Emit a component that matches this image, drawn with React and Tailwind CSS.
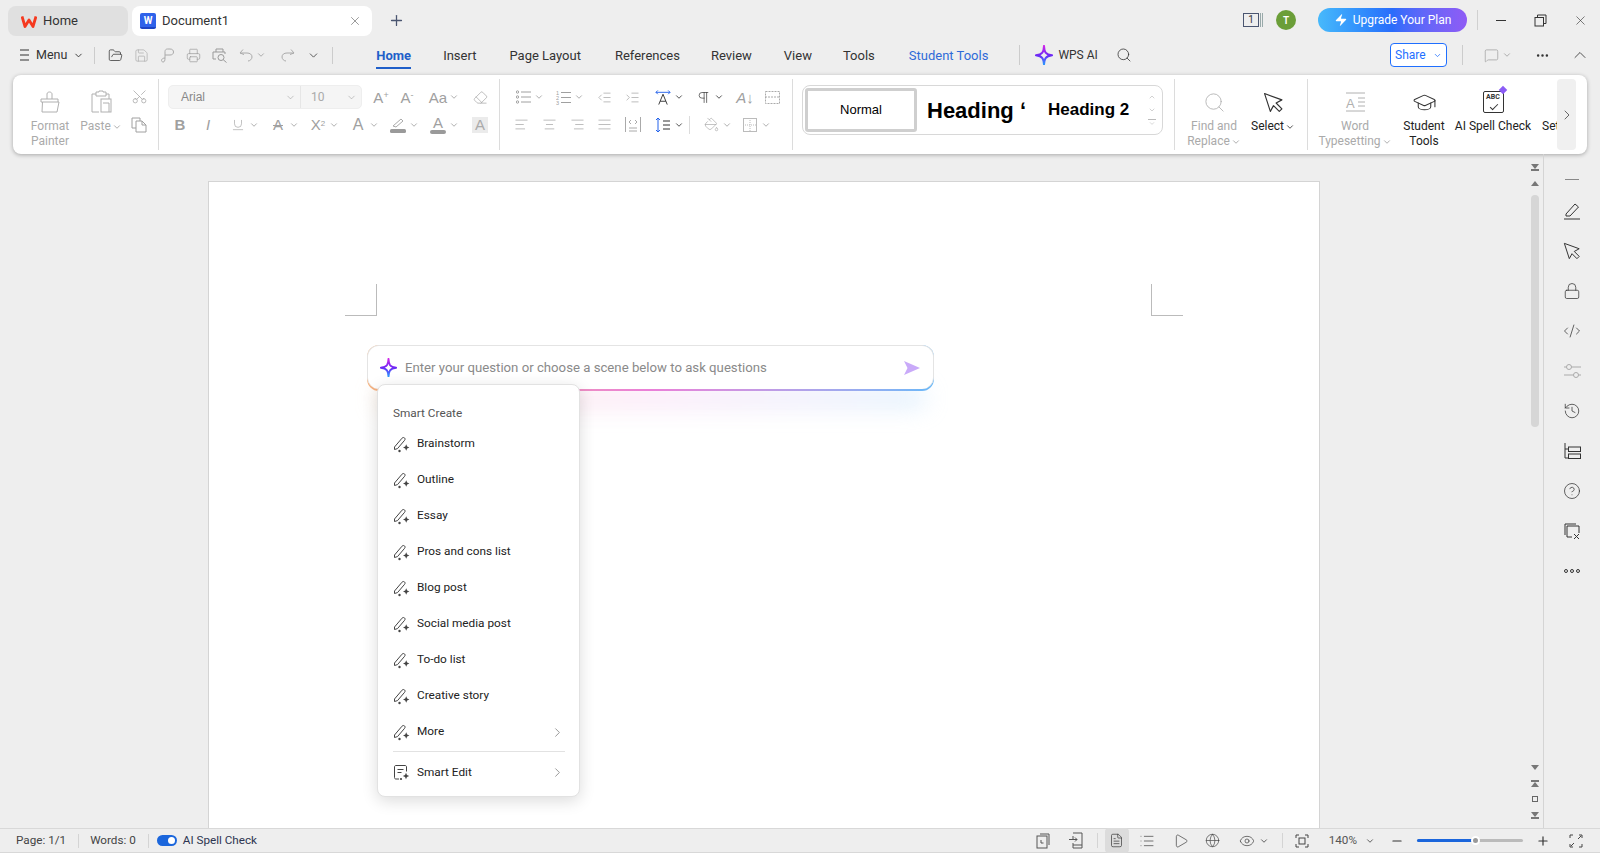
import React from 'react'
import {
  AlignCenter, AlignJustify, AlignLeft, AlignRight, ChevronDown, ChevronRight, ChevronUp, CodeXml, Ellipsis,
  Eraser, Eye, FileText, FolderOpen, Globe, GraduationCap, History, Indent, List, Lock, MessageSquare,
  Minus, Outdent, PaintBucket, Pilcrow, Play, Plus, Printer, Save, Scissors, Search, Underline, X, Zap, CircleHelp,
} from 'lucide-react'

const font = { fontFamily: 'Roboto, "Noto Sans", sans-serif' }

const Star = ({ size = 20 }) => (
  <svg width={size} height={size * 1.15} viewBox="0 0 20 23">
    <defs>
      <linearGradient id="starG" x1="0" y1="0" x2="0" y2="1">
        <stop offset="0" stopColor="#d026e8" />
        <stop offset="0.5" stopColor="#6d28f5" />
        <stop offset="1" stopColor="#2b9cff" />
      </linearGradient>
    </defs>
    <path d="M10 1 C10.4 8 11.5 10.5 19 11.5 C11.5 12.5 10.4 15 10 22 C9.6 15 8.5 12.5 1 11.5 C8.5 10.5 9.6 8 10 1 Z" fill="none" stroke="url(#starG)" strokeWidth="2.2" strokeLinejoin="round" />
  </svg>
)

const Cursor = ({ size = 20, color = '#333' }) => (
  <svg width={size} height={size} viewBox="0 0 20 20" fill="none" stroke={color} strokeWidth="1.1" strokeLinejoin="round">
    <path d="M1.5 1.5 L18 7.5 L12.5 10.5 L18 16 L15.5 18.5 L10 13 L7 18.5 Z" />
  </svg>
)

const Spark = ({ x, y, r = 3 }) => (
  <path d={`M${x} ${y - r} L${x + r * 0.3} ${y - r * 0.3} L${x + r} ${y} L${x + r * 0.3} ${y + r * 0.3} L${x} ${y + r} L${x - r * 0.3} ${y + r * 0.3} L${x - r} ${y} L${x - r * 0.3} ${y - r * 0.3} Z`} fill="#444" stroke="none" />
)

const PenSpark = () => (
  <svg width="17" height="17" viewBox="0 0 17 17" fill="none" stroke="#444" strokeWidth="1">
    <path d="M1.5 11 L9 2.2 C9.8 1.3 11 1.3 11.6 2 C12.2 2.7 12.2 3.5 11.6 4.3 L4.5 12.6 L1.5 13.5 Z" />
    <Spark x={13.2} y={11.5} r={3.2} />
    <circle cx="6.5" cy="15" r="1.2" fill="#444" stroke="none" />
  </svg>
)

const EditSpark = () => (
  <svg width="17" height="17" viewBox="0 0 17 17" fill="none" stroke="#444" strokeWidth="1">
    <path d="M6 15 H3 C2 15 1.5 14.5 1.5 13.5 V3 C1.5 2 2 1.5 3 1.5 H12 C13 1.5 13.5 2 13.5 3 V7.5" />
    <path d="M4.5 5.5 H10.5 M4.5 8.5 H8.5" />
    <Spark x={13} y={12} r={3.2} />
    <circle cx="8" cy="15" r="1.1" fill="#444" stroke="none" />
  </svg>
)

const Chev = ({ dark, className = '' }) => (
  <ChevronDown size={10} strokeWidth={2} className={`${dark ? 'text-[#333]' : 'text-[#a0a0a0]'} shrink-0 ${className}`} />
)

// one tool: the 16px icon box sits at the left of the cell, so the cell width is the distance to the next one
const Tool = ({ w, chev, dark, children }) => (
  <div className={`${w} flex items-center shrink-0`}>
    <div className={`w-4 h-4 flex items-center justify-center shrink-0 ${dark ? 'text-[#333]' : 'text-[#a0a0a0]'}`}>{children}</div>
    {chev && <Chev dark={dark} className="ml-[3px]" />}
  </div>
)

const Glyph = ({ children, className = '' }) => (
  <span className={`leading-none text-[15px] whitespace-nowrap ${className}`} style={{ fontFamily: '"Liberation Sans", sans-serif' }}>{children}</span>
)

const BigTool = ({ w, icon, lines, chev, dark, className = '' }) => (
  <div className={`${w} flex flex-col items-center pt-[10px] shrink-0 ${className}`}>
    <div className="h-[30px] flex items-center justify-center translate-y-[2px]">{icon}</div>
    <div className={`mt-1 text-[12px] leading-[15px] text-center whitespace-nowrap ${dark ? 'text-[#222]' : 'text-[#aaa]'}`}>
      {lines.map((l, i) => (
        <div key={l} className="flex items-center justify-center">
          {l}
          {chev && i === lines.length - 1 && <Chev dark={dark} className="ml-[1px]" />}
        </div>
      ))}
    </div>
  </div>
)

const TitleBar = () => (
  <div className="h-[42px] flex items-start pt-[6px] pl-2 shrink-0">
    <div className="w-[120px] h-[30px] bg-[#e0e0e0] rounded-lg flex items-center pl-[13px] gap-[6px] text-[13px] text-[#333]">
      <svg width="16" height="13" viewBox="0 0 16 13">
        <path d="M1 1.5 L4 11.5 L8 5 L12 11.5 L15 1.5" fill="none" stroke="#f5391f" strokeWidth="2.8" strokeLinejoin="round" />
      </svg>
      Home
    </div>
    <div className="ml-1 w-[240px] h-[30px] bg-white rounded-lg flex items-center pl-2 text-[13px] text-[#333]">
      <div className="w-4 h-4 rounded-[2px] bg-[#2f62ea] text-white text-[10px] font-bold flex items-center justify-center border-b-2 border-[#1d44c4]">W</div>
      <span className="ml-[6px] flex-1">Document1</span>
      <X size={14} strokeWidth={1} className="mr-[10px] text-[#555]" />
    </div>
    <Plus size={17} strokeWidth={1.8} className="ml-4 mt-[6px] text-[#4a5570]" />
    <div className="flex-1" />
    <div className="flex items-center h-6 mt-[2px]">
      <div className="w-[16px] h-[14px] border border-[#4a5570] text-[10px] leading-[12px] text-center text-[#333]">1</div>
      <div className="ml-[1px] w-[3px] h-[14px] border-x border-[#9aa]" />
      <div className="ml-[13px] w-5 h-5 rounded-full bg-[#6b9e38] text-white text-[10px] font-semibold flex items-center justify-center">T</div>
      <div className="ml-[22px] w-[149px] h-6 rounded-full bg-gradient-to-r from-[#48b9fb] via-[#2a6cfb] to-[#8f5bf5] flex items-center justify-center gap-[5px] text-white text-[12px]">
        <Zap size={14} fill="#fff" strokeWidth={0} />
        Upgrade Your Plan
      </div>
      <div className="ml-[10px] w-px h-5 bg-[#d0d0d0]" />
      <div className="ml-[18px] w-[10px] h-px bg-[#333]" />
      <svg className="ml-[28px]" width="13" height="13" viewBox="0 0 13 13" fill="none" stroke="#333">
        <path d="M3.5 3.5 V1 H12 V9.5 H9.5" />
        <rect x="1" y="3.5" width="8.5" height="8.5" />
      </svg>
      <X size={15} strokeWidth={1} className="ml-[26px] mr-[12px] text-[#333]" />
    </div>
  </div>
)

const tabs = [
  ['Insert', 'ml-[32px]'],
  ['Page Layout', 'ml-[33px]'],
  ['References', 'ml-[34px]'],
  ['Review', 'ml-[31px]'],
  ['View', 'ml-[32px]'],
  ['Tools', 'ml-[31px]'],
]

const MenuBar = () => (
  <div className="h-[33px] flex items-center shrink-0 text-[#333] pb-[7px] whitespace-nowrap">
    <svg className="ml-5 shrink-0" width="9" height="12" viewBox="0 0 9 12" stroke="#333"><path d="M0 1 H9 M0 6 H9 M0 11 H9" /></svg>
    <span className="ml-[7px] text-[12.5px]">Menu</span>
    <ChevronDown size={11} className="ml-[6px]" />
    <div className="ml-[10px] w-px h-[17px] bg-[#ccc]" />
    <FolderOpen size={15} strokeWidth={1.2} className="ml-[13px]" />
    <Save size={15} strokeWidth={1.1} className="ml-[11px] text-[#aaa]" />
    <svg className="ml-[11px]" width="15" height="15" viewBox="0 0 15 15" fill="none" stroke="#aaa"><path d="M5 10 V3.5 C5 2 6 1 7.5 1 H10 C12.5 1 13.5 2.5 13.5 4 C13.5 6 12 7 10 7 H5 M5 10 C3 10 1.5 11 1.5 12.5 C1.5 13.5 2.5 14 3.2 14 C4.5 14 5 12.5 5 10 Z" /></svg>
    <Printer size={15} strokeWidth={1.1} className="ml-[11px] text-[#999]" />
    <svg className="ml-[11px]" width="16" height="15" viewBox="0 0 16 15" fill="none" stroke="#999"><path d="M4 4 V1 H11 V4 M1 11 V4 H13 V6 M1 11 H4" /><circle cx="9" cy="9.5" r="3" /><path d="M11.2 11.7 L14.5 14.5" /></svg>
    <svg className="ml-[11px]" width="14" height="14" viewBox="0 0 14 14" fill="none" stroke="#aaa"><path d="M1 5 L4 1.5 M1 5 L5 6.5 M1 5 H8 C11 5 13 6.5 13 9 C13 11 11 13 9 13" /></svg>
    <Chev className="ml-[3px]" />
    <svg className="ml-[15px]" width="14" height="14" viewBox="0 0 14 14" fill="none" stroke="#aaa"><path d="M13 5 L10 1.5 M13 5 L9 6.5 M13 5 H6 C3 5 1 6.5 1 9 C1 11 3 13 5 13" /></svg>
    <ChevronDown size={13} strokeWidth={1.6} className="ml-[12px] text-[#444]" />
    <div className="ml-[12px] w-px h-[17px] bg-[#ccc]" />
    <div className="ml-[43px] relative text-[13px] font-bold text-[#1f5fc9] h-[33px] flex items-center pt-[2px]">
      Home
      <div className="absolute left-0 right-0 bottom-[3px] h-[2px] bg-[#1f5fc9]" />
    </div>
    {tabs.map(([t, m]) => (
      <span key={t} className={`${m} text-[13px] text-[#333] pt-[2px]`}>{t}</span>
    ))}
    <span className="ml-[34px] text-[13px] text-[#2f6bd8] pt-[2px]">Student Tools</span>
    <div className="ml-[31px] w-px h-[20px] bg-[#ccc]" />
    <div className="ml-[15px] flex"><Star size={18} /></div>
    <span className="ml-[5px] text-[12px]">WPS AI</span>
    <Search size={16} strokeWidth={1.2} className="ml-[18px]" />
    <div className="ml-[258px] w-[57px] h-6 border border-[#1f6fff] rounded-[4px] flex items-center justify-center gap-[7px] text-[12px] text-[#1f6fff] bg-white">
      Share
      <ChevronDown size={9} strokeWidth={2} />
    </div>
    <div className="ml-[15px] w-px h-5 bg-[#ccc]" />
    <MessageSquare size={15} strokeWidth={1.1} className="ml-[21px] text-[#999]" />
    <Chev className="ml-[3px]" />
    <Ellipsis size={15} className="ml-[23px]" />
    <ChevronUp size={20} strokeWidth={1} className="ml-[20px]" />
  </div>
)

const Ribbon = () => (
  <div className="mx-[13px] w-[1574px] h-[79px] bg-white rounded-lg shadow-[0_1px_4px_rgba(0,0,0,0.3)] flex shrink-0 text-[#a0a0a0]">
    {/* clipboard */}
    <div className="w-[146px] my-1 border-r border-[#dcdcdc] flex shrink-0">
      <BigTool w="w-[74px]" className="-mt-1" lines={['Format', 'Painter']} icon={
        <svg width="20" height="23" viewBox="0 0 20 23" fill="none" stroke="#b0b0b0"><path d="M7 8 V3 C7 1.5 8.5 1 9.5 1 C11 1 12 2 12 3 V8 M1 8 H18 V11 L19 11 L17 21 H2 L2.5 11 H1 Z M2.5 11 H18" /></svg>
      } />
      <BigTool w="w-[42px]" className="-ml-[7px] -mt-1" lines={['Paste']} chev icon={
        <svg width="21" height="24" viewBox="0 0 21 24" fill="none" stroke="#b0b0b0"><path d="M5 4 H1 V22 H8 M15 4 H18 V9 M5 6 V2 H8 V1 H12 V2 H15 V6 Z" /><rect x="10" y="9" width="10" height="13" /><path d="M12 13 H18 V22" /></svg>
      } />
      <div className="w-[34px] flex flex-col items-center">
        <div className="h-[26px] flex items-end"><Scissors size={17} strokeWidth={1} className="-rotate-90" /></div>
        <div className="h-[40px] flex items-center">
          <svg width="16" height="16" viewBox="0 0 16 16" fill="none" stroke="#a0a0a0"><path d="M5 11 H1 V1 H9 V4" /><path d="M5 4 H11 L15 8 V15 H5 Z M11 4 V8 H15" /></svg>
        </div>
      </div>
    </div>

    {/* font */}
    <div className="w-[341px] my-1 border-r border-[#dcdcdc] shrink-0">
      <div className="h-[28px] flex items-center pl-[9px] mt-1">
        <div className="w-[194px] h-6 rounded-[5px] bg-[#f5f5f5] border border-[#eee] flex items-center text-[12px] text-[#888] shrink-0">
          <span className="ml-3 flex-1" style={{ fontFamily: '"Liberation Sans", sans-serif' }}>Arial</span>
          <ChevronDown size={11} strokeWidth={1} className="mr-[4px]" />
          <div className="w-px h-full bg-[#e6e6e6]" />
          <span className="ml-[10px] w-[35px] text-[#aaa]">10</span>
          <ChevronDown size={11} strokeWidth={1} className="mr-[4px]" />
        </div>
        <div className="ml-[11px] flex items-center">
          <Tool w="w-[26px]"><Glyph>A<sup className="text-[9px]">+</sup></Glyph></Tool>
          <Tool w="w-[31px]"><Glyph>A<sup className="text-[9px]">-</sup></Glyph></Tool>
          <Tool w="w-[42px]" chev><Glyph>Aa</Glyph></Tool>
          <Tool w="w-4"><Eraser size={15} strokeWidth={1.1} /></Tool>
        </div>
      </div>
      <div className="h-[27px] flex items-center pl-[13px]">
        <Tool w="w-[28px]"><Glyph className="font-bold">B</Glyph></Tool>
        <Tool w="w-[30px]"><Glyph className="italic">I</Glyph></Tool>
        <Tool w="w-[40px]" chev><Underline size={14} strokeWidth={1.1} /></Tool>
        <Tool w="w-[40px]" chev><Glyph className="line-through">A</Glyph></Tool>
        <Tool w="w-[40px]" chev><Glyph>X<sup className="text-[8px]">2</sup></Glyph></Tool>
        <Tool w="w-[40px]" chev><Glyph className="text-[16px]">A</Glyph></Tool>
        <Tool w="w-[40px]" chev>
          <svg width="16" height="16" viewBox="0 0 16 16" fill="none" stroke="#aaa"><path d="M3 9 L11 2 L13 4 L6 10 Z" /><rect x="0" y="12" width="16" height="4" rx="1.5" fill="#9a9a9a" stroke="none" /></svg>
        </Tool>
        <Tool w="w-[42px]" chev>
          <div className="flex flex-col items-center"><Glyph className="text-[12px]">A</Glyph><div className="w-4 h-1 rounded-sm bg-[#9a9a9a]" /></div>
        </Tool>
        <div className="w-4 h-4 bg-[#ebebeb] flex items-center justify-center text-[#aaa]"><Glyph className="text-[12px]">A</Glyph></div>
      </div>
    </div>

    {/* paragraph */}
    <div className="w-[293px] my-1 border-r border-[#dcdcdc] shrink-0">
      <div className="h-[28px] flex items-center pl-[15px] mt-1">
        <Tool w="w-[40px]" chev>
          <svg width="15" height="14" viewBox="0 0 15 14" fill="none" stroke="#a0a0a0"><circle cx="1.5" cy="2" r="1.2" /><circle cx="1.5" cy="7" r="1.2" /><circle cx="1.5" cy="12" r="1.2" /><path d="M5 2 H15 M5 7 H15 M5 12 H15" /></svg>
        </Tool>
        <Tool w="w-[41px]" chev>
          <svg width="15" height="15" viewBox="0 0 15 15" fill="none" stroke="#a0a0a0"><path d="M5 2.5 H15 M5 7.5 H15 M5 12.5 H15" /><text x="0" y="5" fontSize="5.5" fill="#a0a0a0" stroke="none" fontFamily="Liberation Sans">1</text><text x="0" y="10" fontSize="5.5" fill="#a0a0a0" stroke="none" fontFamily="Liberation Sans">2</text><text x="0" y="15" fontSize="5.5" fill="#a0a0a0" stroke="none" fontFamily="Liberation Sans">3</text></svg>
        </Tool>
        <Tool w="w-[28px]"><Outdent size={15} strokeWidth={1.1} /></Tool>
        <Tool w="w-[31px]"><Indent size={15} strokeWidth={1.1} /></Tool>
        <Tool w="w-[40px]" chev dark>
          <svg width="17" height="17" viewBox="0 0 17 17" fill="none">
            <path d="M1 3 H16 M3 1 L1 3 L3 5 M14 1 L16 3 L14 5" stroke="#2563eb" />
            <path d="M4 16 L8.5 5 L13 16 M5.5 12.5 H11.5" stroke="#333" />
          </svg>
        </Tool>
        <Tool w="w-[42px]" chev dark><Pilcrow size={15} strokeWidth={1.1} /></Tool>
        <Tool w="w-[27px]"><Glyph className="italic text-[14px]">A↓</Glyph></Tool>
        <Tool w="w-4">
          <svg width="15" height="13" viewBox="0 0 15 13" fill="none" stroke="#aaa" strokeDasharray="2 1"><rect x="0.5" y="0.5" width="14" height="12" /><path d="M0 6 H15" /></svg>
        </Tool>
      </div>
      <div className="h-[27px] flex items-center pl-[13px]">
        <Tool w="w-[28px]"><AlignLeft size={15} strokeWidth={1.1} /></Tool>
        <Tool w="w-[28px]"><AlignCenter size={15} strokeWidth={1.1} /></Tool>
        <Tool w="w-[27px]"><AlignRight size={15} strokeWidth={1.1} /></Tool>
        <Tool w="w-[29px]"><AlignJustify size={15} strokeWidth={1.1} /></Tool>
        <Tool w="w-[30px]">
          <svg width="16" height="15" viewBox="0 0 16 15" fill="none" stroke="#aaa"><path d="M0.5 0 V15 M15.5 0 V15 M4 11 H12 M4 14 H12 M6 3 L4 5 L6 7 M10 3 L12 5 L10 7" /></svg>
        </Tool>
        <Tool w="w-[34px]" chev dark>
          <svg width="16" height="16" viewBox="0 0 16 16" fill="none" stroke="#333"><path d="M8 4 H15 M8 8 H15 M8 12 H15" /><path d="M3 1 V15 M1 3 L3 1 L5 3 M1 13 L3 15 L5 13" stroke="#2563eb" /></svg>
        </Tool>
        <div className="w-px h-[18px] bg-[#dcdcdc] shrink-0" />
        <div className="ml-[13px] flex items-center">
          <Tool w="w-[39px]" chev><PaintBucket size={15} strokeWidth={1} /></Tool>
          <Tool w="w-4" chev>
            <svg width="14" height="14" viewBox="0 0 14 14" fill="none" stroke="#bbb"><rect x="0.5" y="0.5" width="13" height="13" /><path d="M7 0 V14 M0 7 H14" strokeDasharray="1 1" /></svg>
          </Tool>
        </div>
      </div>
    </div>

    {/* styles */}
    <div className="w-[382px] my-1 border-r border-[#dcdcdc] shrink-0 pl-[9px] pt-[6px]">
      <div className="w-[361px] h-[50px] rounded-lg border border-[#d8d8d8] flex items-center text-black" style={{ fontFamily: '"Liberation Sans", sans-serif' }}>
        <div className="ml-[2px] w-[112px] h-[44px] rounded-[3px] border-[3px] border-[#cfcfcf] bg-white flex items-center justify-center text-[13px]">Normal</div>
        <div className="ml-[10px] w-[100px] whitespace-nowrap text-[22px] font-bold">Heading ʻ</div>
        <div className="ml-[21px] w-[95px] whitespace-nowrap text-[17px] font-bold">Heading 2</div>
        <div className="ml-[5px] flex flex-col items-center gap-[5px] text-[#bbb]">
          <ChevronUp size={8} strokeWidth={2} />
          <ChevronDown size={8} strokeWidth={2} />
          <ChevronDown size={8} strokeWidth={2} className="border-t border-[#bbb]" />
        </div>
      </div>
    </div>

    {/* find */}
    <div className="w-[133px] my-1 border-r border-[#dcdcdc] flex shrink-0">
      <BigTool w="w-[78px]" className="-mt-1" lines={['Find and', 'Replace']} chev icon={<Search size={23} strokeWidth={0.9} className="text-[#b0b0b0]" />} />
      <BigTool w="w-[40px]" className="-mt-1" dark lines={['Select']} chev icon={<Cursor size={21} />} />
    </div>

    {/* tools, cut off by the scroll button */}
    <div className="flex shrink-0">
      <BigTool w="w-[94px]" lines={['Word', 'Typesetting']} chev icon={
        <svg width="21" height="20" viewBox="0 0 21 20" fill="none" stroke="#b0b0b0"><path d="M1 1 H20 M1 19 H20 M13 6 H20 M13 10 H20 M13 14 H20" /><text x="1" y="16" fontSize="13" fill="#b0b0b0" stroke="none" fontFamily="Liberation Sans">A</text></svg>
      } />
      <BigTool w="w-[44px]" dark lines={['Student', 'Tools']} icon={<GraduationCap size={25} strokeWidth={1} className="text-[#333]" />} />
      <BigTool w="w-[94px]" dark lines={['AI Spell Check']} icon={
        <div className="relative w-[21px] h-[22px] border border-[#333] rounded-[2px] text-[7px] font-bold text-[#333] text-center leading-[11px]">
          ABC
          <div className="absolute -top-[5px] -right-[3px] w-[6px] h-[6px] bg-[#8b5cf6] rotate-45" />
          <div className="absolute left-[6px] bottom-[4px] w-[8px] h-[4px] border-l border-b border-[#333] -rotate-45" />
        </div>
      } />
      <div className="w-[17px] overflow-hidden pl-[2px] pt-[44px] text-[12px] leading-[15px] text-[#222] whitespace-nowrap">Set</div>
      <div className="w-[19px] h-[71px] mt-1 rounded bg-[#f0f0f0] flex items-center justify-center text-[#444]">
        <ChevronRight size={16} strokeWidth={1.2} />
      </div>
    </div>
  </div>
)

const items = ['Brainstorm', 'Outline', 'Essay', 'Pros and cons list', 'Blog post', 'Social media post', 'To-do list', 'Creative story', 'More']

const AskBox = () => (
  <>
    <div className="absolute left-[170px] top-[208px] w-[545px] h-[16px] bg-gradient-to-r from-[#fbd0a8] via-[#f4c4ee] to-[#b5dcfb] blur-md opacity-50" />
    <div className="absolute left-[158px] top-[163px] w-[567px] h-[46px] rounded-xl bg-gradient-to-r from-[#f8b27c] via-[#ea7fd8] to-[#68b8f8] pb-[2px]">
      <div className="h-full rounded-xl bg-white border-x border-t border-[#e4e4e4] flex items-center pl-[12px]">
        <Star size={17} />
        <span className="ml-2 flex-1 text-[13.2px] pt-[1px] text-[#8a8a8a]">Enter your question or choose a scene below to ask questions</span>
        <svg className="mr-[13px]" width="16" height="14" viewBox="0 0 16 14"><path d="M0 0 L16 7 L0 14 L3.5 7 Z" fill="#c9aaf9" /></svg>
      </div>
    </div>
    <div className="absolute left-[168px] top-[202px] w-[203px] h-[413px] bg-white rounded-lg border border-[#e2e2e2] shadow-[0_4px_16px_rgba(0,0,0,0.14)] pl-[15px] pr-[14px] text-[11.8px] text-[#222]">
      <div className="mt-[20px] text-[#555] leading-4">Smart Create</div>
      <div className="mt-[5px]">
        {items.map((t) => (
          <div key={t} className="h-[36px] flex items-center">
            <PenSpark />
            <span className="ml-[7px] flex-1">{t}</span>
            {t === 'More' && <ChevronRight size={15} strokeWidth={1.2} className="text-[#777]" />}
          </div>
        ))}
      </div>
      <div className="mt-px h-px bg-[#e2e2e2]" />
      <div className="h-[41px] flex items-center">
        <EditSpark />
        <span className="ml-[7px] flex-1">Smart Edit</span>
        <ChevronRight size={15} strokeWidth={1.2} className="text-[#777]" />
      </div>
    </div>
  </>
)

const sideIcons = [
  <svg key="pen" width="18" height="18" viewBox="0 0 18 18" fill="none" stroke="#333"><path d="M3 12 L12 2 L15.5 5 L7 14 H3 Z M1 17 H17" /></svg>,
  <Cursor key="cur" size={18} />,
  <Lock key="lock" size={18} strokeWidth={1} className="text-[#333]" />,
  <CodeXml key="code" size={18} strokeWidth={1} className="text-[#333]" />,
  <svg key="sl" width="17" height="16" viewBox="0 0 17 16" fill="none" stroke="#aaa"><circle cx="5" cy="4" r="2.5" /><path d="M0 4 H2.5 M7.5 4 H17" /><circle cx="12" cy="12" r="2.5" /><path d="M0 12 H9.5 M14.5 12 H17" /></svg>,
  <History key="hist" size={18} strokeWidth={1} className="text-[#333]" />,
  <svg key="tree" width="17" height="17" viewBox="0 0 17 17" fill="none" stroke="#333"><path d="M1 0 V15 H4 M1 6 H4" /><rect x="4.5" y="4" width="12" height="4.5" /><rect x="4.5" y="11" width="12" height="4.5" /></svg>,
  <CircleHelp key="help" size={18} strokeWidth={1} className="text-[#333]" />,
  <svg key="x" width="16" height="16" viewBox="0 0 16 16" fill="none" stroke="#333"><path d="M1 12 V1 H12 M3 14 V3 H15 V10 M3 14 H8 M10 11 L15 16 M15 11 L10 16" /></svg>,
  <svg key="dots" width="16" height="4" viewBox="0 0 16 4" fill="none" stroke="#333"><circle cx="2" cy="2" r="1.5" /><circle cx="8" cy="2" r="1.5" /><circle cx="14" cy="2" r="1.5" /></svg>,
]

const Arrow = ({ up, bar }) => (
  <div className="h-4 flex flex-col items-center justify-center">
    {bar && up && <div className="w-[8px] h-[2px] bg-[#777]" />}
    <div className={`w-0 h-0 border-x-[4px] border-x-transparent ${up ? 'border-b-[5px] border-b-[#777]' : 'border-t-[5px] border-t-[#777]'}`} />
    {bar && !up && <div className="w-[8px] h-[2px] bg-[#777]" />}
  </div>
)

const Main = () => (
  <div className="flex-1 flex min-h-0">
    <div className="flex-1 pl-[208px] pt-[27px] min-w-0">
      <div className="relative w-[1112px] h-full bg-white border-x border-t border-[#d4d4d4]">
        <div className="absolute left-[136px] top-[102px] w-8 h-8 border-r border-b border-[#bbb]" />
        <div className="absolute left-[942px] top-[102px] w-8 h-8 border-l border-b border-[#bbb]" />
        <AskBox />
      </div>
    </div>
    <div className="w-4 flex flex-col items-center shrink-0 pr-[1px]">
      <div className="mt-[5px]"><Arrow bar /></div>
      <Arrow up />
      <div className="mt-1 w-2 h-[232px] rounded bg-[#d6d6d6]" />
      <div className="flex-1" />
      <Arrow />
      <Arrow up bar />
      <div className="h-4 flex items-center"><div className="w-[6px] h-[6px] border border-[#666]" /></div>
      <Arrow bar />
      <div className="h-[5px]" />
    </div>
    <div className="w-[57px] border-l border-[#d4d4d4] flex flex-col items-center pt-2 shrink-0">
      <div className="h-[34px] flex items-center"><div className="w-[14px] h-px bg-[#888]" /></div>
      {sideIcons.map((ic, i) => (
        <div key={ic.key} className={`w-full flex items-center justify-center ${i === 0 ? 'h-[30px] mb-[5px]' : 'h-[40px]'}`}>{ic}</div>
      ))}
    </div>
  </div>
)

const StatusBar = () => (
  <div className="h-[25px] border-y border-[#d8d8d8] flex items-center text-[11.7px] text-[#444] shrink-0">
    <span className="ml-4">Page: 1/1</span>
    <div className="ml-[12px] w-px h-[14px] bg-[#d4d4d4]" />
    <span className="ml-[11px]">Words: 0</span>
    <div className="ml-3 w-px h-[14px] bg-[#d4d4d4]" />
    <div className="ml-2 w-5 h-[11px] rounded-full bg-[#1b66dc] flex items-center justify-end pr-[2px]">
      <div className="w-[7px] h-[7px] rounded-full bg-white" />
    </div>
    <span className="ml-[6px] text-[#2d3550]">AI Spell Check</span>
    <div className="flex-1" />
    <svg width="14" height="16" viewBox="0 0 14 16" fill="none" stroke="#555"><rect x="1" y="3" width="10" height="12" /><path d="M4 1 H13 V12 M5 7 V10 H7.5" /></svg>
    <svg className="ml-[18px]" width="16" height="17" viewBox="0 0 16 17" fill="none" stroke="#555"><path d="M5 1 H14 V16 H5 V11 M5 7 V4 M1 7.5 H9 M7 5.5 L9 7.5 L7 9.5 M5 13 H14" /></svg>
    <div className="ml-[13px] w-px h-[15px] bg-[#d4d4d4]" />
    <div className="ml-[7px] w-6 h-[25px] bg-[#dcdcdc] flex items-center justify-center rounded-sm">
      <FileText size={15} strokeWidth={1.1} className="text-[#333]" />
    </div>
    <List size={16} strokeWidth={1.1} className="ml-[10px] text-[#444]" />
    <Play size={16} strokeWidth={1.1} className="ml-[18px] text-[#444]" />
    <Globe size={15} strokeWidth={1.1} className="ml-[16px] text-[#444]" />
    <Eye size={16} strokeWidth={1.1} className="ml-[19px] text-[#444]" />
    <ChevronDown size={10} strokeWidth={2} className="ml-[4px] text-[#444]" />
    <div className="ml-[13px] w-px h-[15px] bg-[#d4d4d4]" />
    <svg className="ml-[12px]" width="14" height="14" viewBox="0 0 14 14" fill="none" stroke="#444"><path d="M1 4 V1 H4 M10 1 H13 V4 M13 10 V13 H10 M4 13 H1 V10" /><rect x="4" y="4" width="6" height="6" /></svg>
    <span className="ml-[20px] text-[#555]">140%</span>
    <ChevronDown size={10} strokeWidth={2} className="ml-[8px] text-[#444]" />
    <Minus size={14} strokeWidth={2} className="ml-[15px] text-[#333]" />
    <div className="ml-[13px] w-[106px] h-[3px] bg-[#bbb] relative rounded-full">
      <div className="w-[56px] h-full bg-[#1b66dc] rounded-full" />
      <div className="absolute left-[54px] -top-[3px] w-[9px] h-[9px] rounded-full bg-[#999] border-2 border-white" />
    </div>
    <Plus size={14} strokeWidth={2} className="ml-[13px] text-[#333]" />
    <svg className="ml-[19px] mr-[17px]" width="14" height="14" viewBox="0 0 14 14" fill="none" stroke="#444"><path d="M1 4 V1 H4 M10 1 H13 V4 M13 10 V13 H10 M4 13 H1 V10 M9 5 L12 2 M5 9 L2 12" /></svg>
  </div>
)

export default function App() {
  return (
    <div className="w-[1600px] h-[853px] bg-[#eeeeee] flex flex-col overflow-hidden" style={font}>
      <TitleBar />
      <MenuBar />
      <Ribbon />
      <Main />
      <StatusBar />
    </div>
  )
}
